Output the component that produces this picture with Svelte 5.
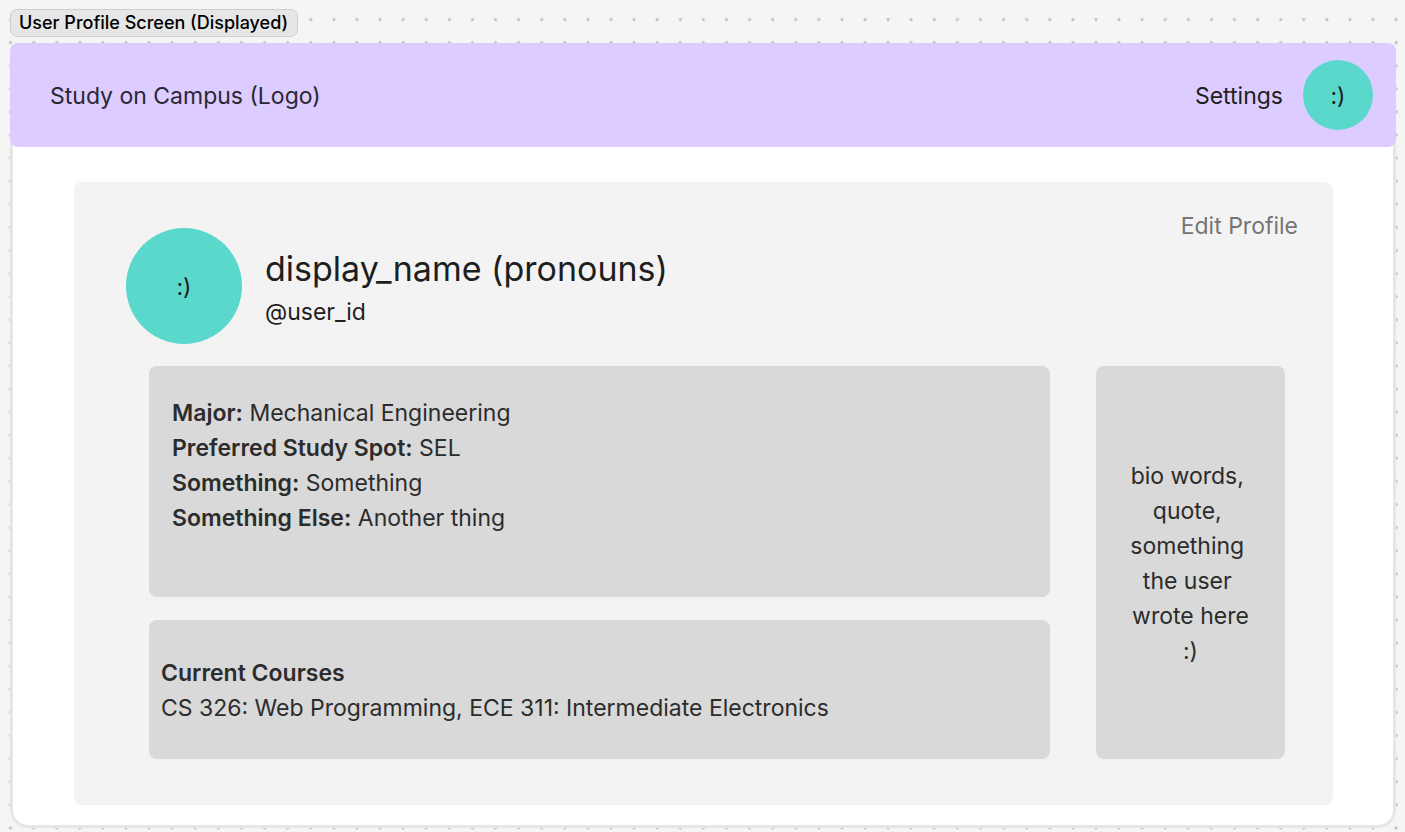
<script>
  const details = [
    ['Major:', 'Mechanical Engineering'],
    ['Preferred Study Spot:', 'SEL'],
    ['Something:', 'Something'],
    ['Something Else:', 'Another thing']
  ];
  const courses = ['CS 326: Web Programming', 'ECE 311: Intermediate Electronics'];
  const bio = 'bio words, quote, something the user wrote here\n:)';
</script>

<div class="canvas">
  <div class="frame-label">User Profile Screen (Displayed)</div>
  <div class="screen">
    <header>
      <span class="logo">Study on Campus (Logo)</span>
      <nav>
        <a href="#settings">Settings</a>
        <span class="avatar small">:)</span>
      </nav>
    </header>
    <main>
      <div class="identity">
        <span class="avatar">:)</span>
        <div class="names">
          <h1>display_name (pronouns)</h1>
          <p>@user_id</p>
        </div>
        <button type="button">Edit Profile</button>
      </div>
      <div class="panels">
        <section class="panel details">
          {#each details as [label, value]}
            <p><b>{label}</b> {value}</p>
          {/each}
        </section>
        <aside class="panel bio">{bio}</aside>
        <section class="panel courses">
          <h2>Current Courses</h2>
          <p>{courses.join(', ')}</p>
        </section>
      </div>
    </main>
  </div>
</div>

<style>
  :global(body) {
    margin: 0;
    background: #f5f5f5;
  }
  .canvas {
    --pitch: calc((100vw - 19px) / 60);
    box-sizing: border-box;
    min-height: 100vh;
    padding: 9px 9px 4px 10px;
    font: 23px/35px Inter, sans-serif;
    color: #1e1e1e;
    background: #f5f5f5 radial-gradient(circle, #bdbdbd 1px, transparent 2px) -1px 8px / var(--pitch) var(--pitch);
  }
  h1, h2, p {
    margin: 0;
    font-size: inherit;
  }
  .frame-label {
    box-sizing: border-box;
    width: fit-content;
    height: 28px;
    padding: 0 9px 0 8px;
    border: 1px solid #cfcfcf;
    border-radius: 7px;
    background: #e6e6e6;
    font-size: 18px;
    line-height: 26px;
    font-weight: 500;
    color: #000;
  }
  .screen {
    margin-top: 6px;
    padding-bottom: 23px;
    border-radius: 8px 8px 18px 18px;
    background: #fff;
    box-shadow: inset 0 0 0 3px #e6e6e6;
  }
  header {
    display: flex;
    align-items: center;
    justify-content: space-between;
    height: 104px;
    padding: 0 23px 0 40px;
    border-radius: 8px;
    background: #dcccff;
  }
  nav {
    display: flex;
    align-items: center;
    gap: 20px;
  }
  a {
    padding-top: 2px;
    color: inherit;
    text-decoration: none;
  }
  .logo {
    padding-top: 2px;
    color: #2b2735;
  }
  .avatar {
    box-sizing: border-box;
    display: flex;
    flex: none;
    align-items: center;
    justify-content: center;
    width: 116px;
    height: 116px;
    padding-top: 2px;
    border-radius: 50%;
    background: #5ad8cc;
  }
  .avatar.small {
    width: 70px;
    height: 70px;
  }
  main {
    margin: 35px 63px 0 64px;
    padding: 46px 48px 46px 52px;
    border-radius: 8px;
    background: #f3f3f3;
  }
  .identity {
    display: flex;
    align-items: flex-start;
    gap: 23px;
  }
  .names {
    flex: 1;
    padding-top: 17px;
  }
  h1 {
    margin-bottom: 2px;
    font-size: 34px;
    line-height: 48px;
    font-weight: 400;
  }
  button {
    margin: -19px -13px 0 0;
    padding: 0;
    border: 0;
    background: none;
    font: inherit;
    color: #757575;
  }
  .panels {
    display: grid;
    grid-template-columns: 1fr 189px;
    grid-template-rows: 231px 139px;
    gap: 23px 46px;
    margin: 22px 0 0 23px;
  }
  .panel {
    border-radius: 8px;
    background: #d9d9d9;
    color: #2c2c2c;
  }
  .details {
    padding: 30px 23px;
  }
  .bio {
    display: flex;
    grid-column: 2;
    grid-row: 1 / 3;
    align-items: center;
    justify-content: center;
    padding: 2px 30px 0;
    text-align: center;
    white-space: break-spaces;
  }
  .courses {
    display: flex;
    flex-direction: column;
    justify-content: center;
    padding: 2px 12px 0;
  }
  h2, b {
    font-weight: 600;
  }
</style>
